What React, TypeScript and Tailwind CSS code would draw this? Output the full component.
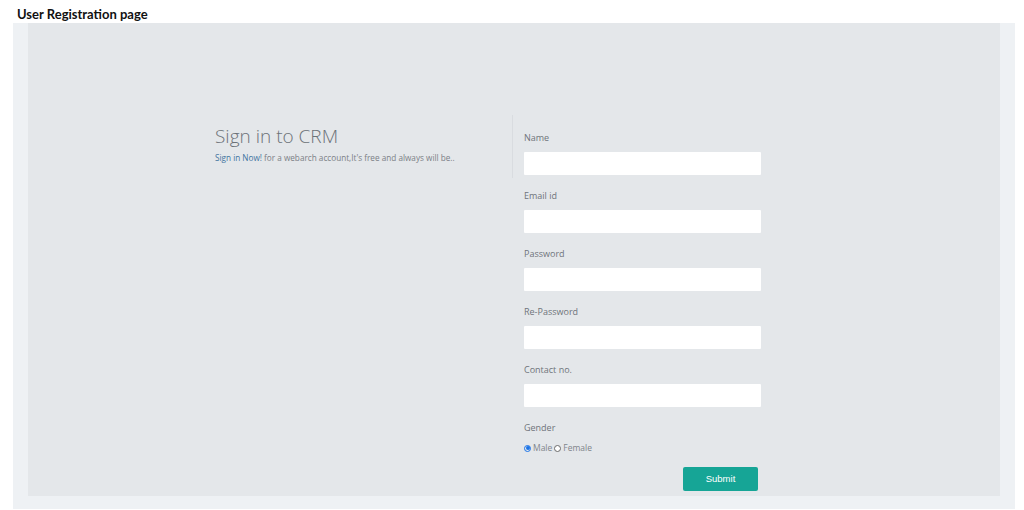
import React from "react";

const fields = ["Name", "Email id", "Password", "Re-Password", "Contact no."];

export default function App() {
  return (
    <div className="w-[1024px] h-[510px] bg-white overflow-hidden" style={{ fontFamily: '"Open Sans", sans-serif' }}>
      <div className="h-[23px] pl-[17px] pt-[6px] text-[13px] leading-[17px] font-bold text-[#111]" style={{ fontFamily: 'Lato, sans-serif' }}>
        User Registration page
      </div>
      <div className="ml-[13px] w-[1002px] h-[486px] bg-[#eef1f4] pl-[15px] pr-[15px] pb-[13px]">
        <div className="h-[473px] bg-[#e4e7ea] pt-[92px] pl-[187px] flex items-start">
          <div className="w-[298px] h-[63px] border-r border-[#d9dce0] pt-[8px]">
            <div className="text-[19px] leading-[27px] font-light text-[#6c7278]">Sign in to CRM</div>
            <div className="text-[8.2px] leading-[12px] mt-[2px] text-[#7b8086]">
              <span className="text-[#3f74a0]">Sign in Now!</span> for a webarch account,It's free and always will be..
            </div>
          </div>
          <div className="pl-[11px] pt-[15px] w-[248px]">
            {fields.map((f) => (
              <div key={f} className="mb-[13px]">
                <div className="h-[16px] leading-[16px] text-[9px] text-[#6f747a] mb-[6px]">{f}</div>
                <div className="w-[237px] h-[23px] bg-white rounded-[1px]" />
              </div>
            ))}
            <div className="h-[16px] leading-[16px] text-[9px] text-[#6f747a] mb-[6px]">Gender</div>
            <div className="flex items-center h-[12px] text-[8.5px] text-[#80858b]">
              <span className="w-[7px] h-[7px] rounded-full border border-[#1a73e8] flex items-center justify-center">
                <span className="w-[4px] h-[4px] rounded-full bg-[#1a73e8]" />
              </span>
              <span className="ml-[2px]">Male</span>
              <span className="ml-[2px] w-[7px] h-[7px] rounded-full border border-[#6a6a6a] bg-white" />
              <span className="ml-[2px]">Female</span>
            </div>
            <div className="flex mt-[13px] pl-[159px]">
              <div
                className="w-[75px] h-[24px] bg-[#16a596] rounded-[2px] text-white text-[9.5px] flex items-center justify-center"
                style={{ fontFamily: '"Liberation Sans", Arial, sans-serif' }}
              >
                Submit
              </div>
            </div>
          </div>
        </div>
      </div>
    </div>
  );
}
